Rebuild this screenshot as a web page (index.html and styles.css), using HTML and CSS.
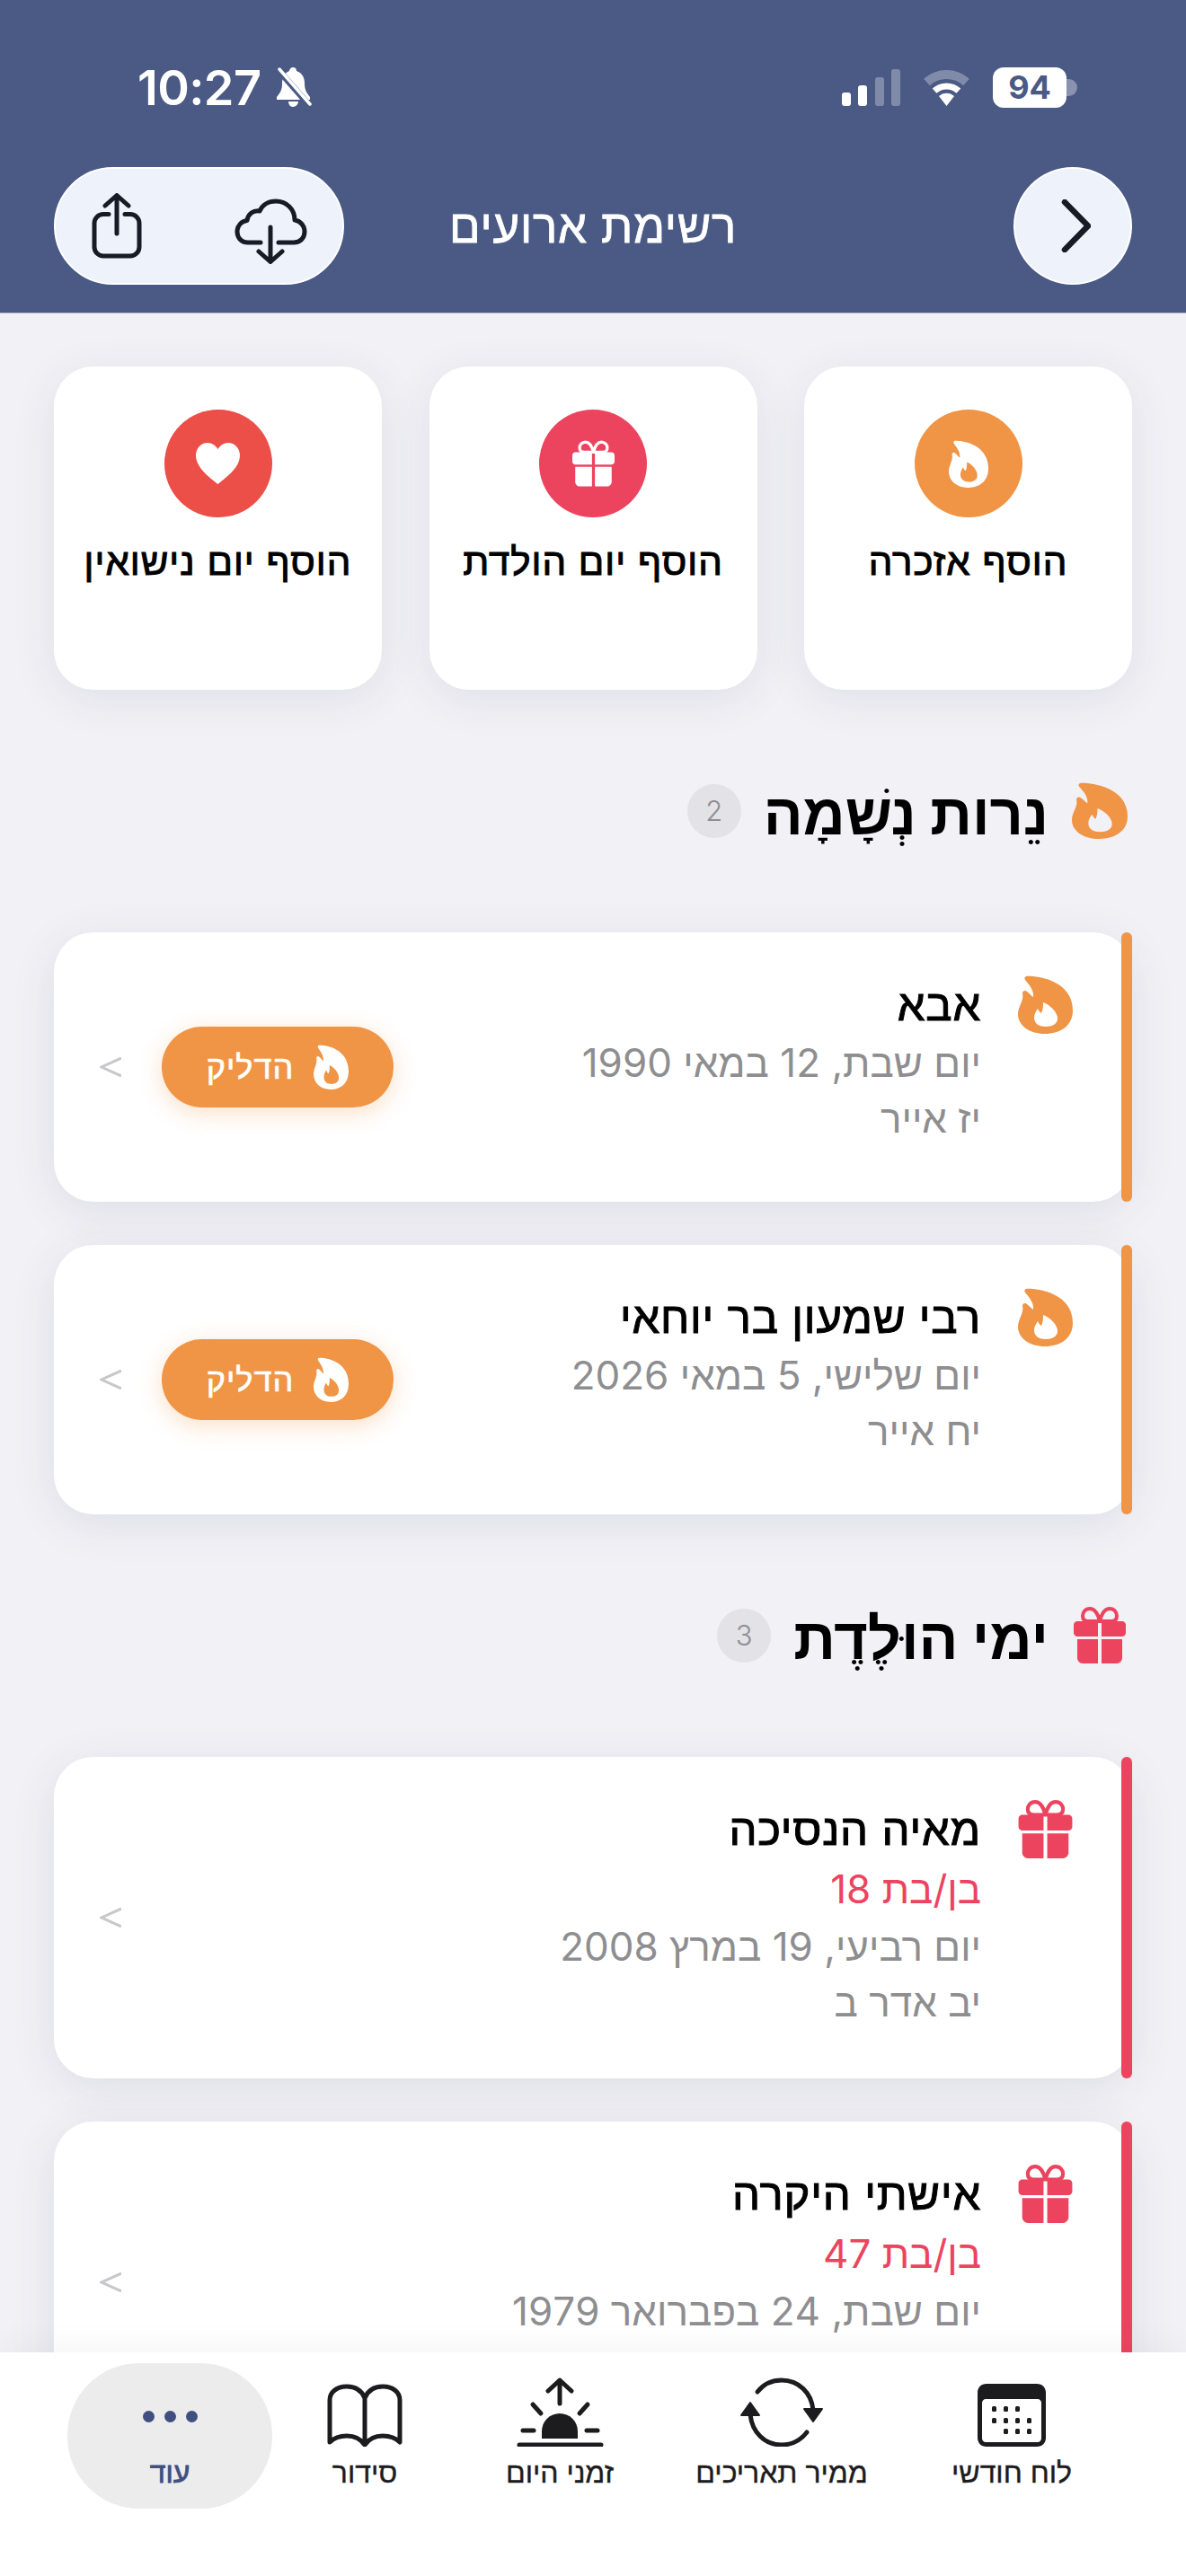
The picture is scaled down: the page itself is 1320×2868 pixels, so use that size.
FILE: index.html
```html
<!DOCTYPE html>
<html lang="he" dir="rtl">

<head>
    <meta charset="UTF-8">
    <meta name="viewport" content="width=device-width, initial-scale=1.0">
    <title>רשימת ארועים</title>
    <link rel="stylesheet" href="styles.css">
</head>

<body>
    <svg class="defs" xmlns="http://www.w3.org/2000/svg">
        <symbol id="flame" viewBox="0 0 61 65" preserveAspectRatio="none">
            <path fill-rule="evenodd" d="M9 1C13 0 61 2 61 39C61 56 47 65 30 65C13 65 0 56 0 43C0 34 7 28 5 20C5 17 8 16 10 18C13 20 15 23 17 24C18 17 13 11 8 5C7 3 7 2 9 1ZM28 30C28 34 28 38 26 42C24 41 23 39 22 37C20 40 18 43 18 47C18 54 24 57 31 57C38 57 44 54 44 48C44 41 36 33 28 30Z" />
        </symbol>
        <symbol id="gift" viewBox="0 0 58 63">
            <path d="M4 16H27V33H4C2 33 0 31 0 29V20C0 18 2 16 4 16ZM31 16H54C56 16 58 18 58 20V29C58 31 56 33 54 33H31ZM4 36H27V63H10C7 63 4 60 4 57ZM31 36H54V57C54 60 51 63 48 63H31Z" />
            <path class="gift-bow" d="M29 16C27 8 24 2 18 2C13 2 10 6 10 10C10 14 12 16 16 16H42C46 16 48 14 48 10C48 6 45 2 40 2C34 2 31 8 29 16Z" />
        </symbol>
    </svg>

    <div class="screen">
        <header class="top">
            <div class="status">
                <div class="status-left">
                    <span class="clock">10:27</span>
                    <svg class="bell" viewBox="0 0 41 44">
                        <path fill="#fff" d="M20 0C23 0 24 2 24 4C30 6 33 11 33 18C33 25 35 28 39 33V36H2V33C6 28 8 25 8 18C8 11 11 6 16 4C16 2 18 0 20 0ZM15 38H26C26 41 23 44 20 44C17 44 15 41 15 38Z" />
                        <path stroke="#4a5a84" stroke-width="7" d="M3 2L38 42" />
                        <path stroke="#fff" stroke-width="3.5" stroke-linecap="round" d="M5 2L39 41" />
                    </svg>
                </div>
                <div class="status-right">
                    <svg class="signal" viewBox="0 0 65 41">
                        <rect x="0" y="26" width="10" height="15" rx="3" fill="#fff" />
                        <rect x="18" y="18" width="10" height="23" rx="3" fill="#fff" />
                        <rect x="37" y="9" width="10" height="32" rx="3" fill="#fff" opacity=".3" />
                        <rect x="55" y="0" width="10" height="41" rx="3" fill="#fff" opacity=".3" />
                    </svg>
                    <svg class="wifi" viewBox="0 0 57 42" fill="none">
                        <path stroke="#fff" stroke-opacity=".3" stroke-width="10" d="M6.5 15.5A33 33 0 0 1 50.5 15.5" />
                        <path stroke="#fff" stroke-width="7" d="M15.1 25.1A20 20 0 0 1 41.9 25.1" />
                        <path fill="#fff" d="M28.5 42L20 31A12.5 12.5 0 0 1 37 31Z" />
                    </svg>
                    <div class="battery">
                        <span class="battery-cap"></span>
                        <span class="battery-level">94</span>
                    </div>
                </div>
            </div>

            <div class="toolbar">
                <button class="round-btn">
                    <svg class="chevron" viewBox="0 0 33 59" fill="none">
                        <path d="M4 3L30 29.5L4 56" />
                    </svg>
                </button>
                <h1 class="page-title">רשימת ארועים</h1>
                <div class="action-pill">
                    <svg class="cloud-icon" viewBox="0 0 81 73" fill="none">
                        <path d="M29 49H15C7 49 3 43 3 37C3 30 8 25 14 24.5C15 17 21 13 28 14C31 7 38 3 46 3C58 3 67 12 67 24C74 25 78 31 78 37C78 44 73 49 66 49H49" />
                        <path d="M40 32V70M27 59L40 70.5L53 59" />
                    </svg>
                    <svg class="share-icon" viewBox="0 0 56 73" fill="none">
                        <path d="M19 23.5H13A10 10 0 0 0 3 33.5V60A10 10 0 0 0 13 70H43A10 10 0 0 0 53 60V33.5A10 10 0 0 0 43 23.5H37" />
                        <path d="M28 45V3M15 14L28 2.5L41 14" />
                    </svg>
                </div>
            </div>
        </header>

        <main class="content">
            <section class="quick-row">
                <a class="quick-card">
                    <span class="quick-circle c-orange"><svg class="qi-flame"><use href="#flame" /></svg></span>
                    <span class="quick-label">הוסף אזכרה</span>
                </a>
                <a class="quick-card">
                    <span class="quick-circle c-pink"><svg class="qi-gift"><use href="#gift" /></svg></span>
                    <span class="quick-label">הוסף יום הולדת</span>
                </a>
                <a class="quick-card">
                    <span class="quick-circle c-red">
                        <svg class="qi-heart" viewBox="0 0 49 46"><path d="M24.5 46C16 39 0 28 0 14C0 6 6 0 13 0C18 0 22 3 24.5 7C27 3 31 0 36 0C43 0 49 6 49 14C49 28 33 39 24.5 46Z" /></svg>
                    </span>
                    <span class="quick-label">הוסף יום נישואין</span>
                </a>
            </section>

            <div class="section-head">
                <svg class="head-icon orange"><use href="#flame" /></svg>
                <h2>נֵרות נְשָׁמָה</h2>
                <span class="count">2</span>
            </div>

            <article class="event">
                <span class="event-bar orange-bg"></span>
                <svg class="event-icon orange"><use href="#flame" /></svg>
                <div class="event-text">
                    <div class="event-name">אבא</div>
                    <div class="event-line">יום שבת, 12 במאי 1990</div>
                    <div class="event-line">יז אייר</div>
                </div>
                <button class="light-btn"><svg><use href="#flame" /></svg>הדליק</button>
                <svg class="go" viewBox="0 0 24 22" fill="none"><path d="M24 1L2 11L24 21" /></svg>
            </article>

            <article class="event">
                <span class="event-bar orange-bg"></span>
                <svg class="event-icon orange"><use href="#flame" /></svg>
                <div class="event-text">
                    <div class="event-name">רבי שמעון בר יוחאי</div>
                    <div class="event-line">יום שלישי, 5 במאי 2026</div>
                    <div class="event-line">יח אייר</div>
                </div>
                <button class="light-btn"><svg><use href="#flame" /></svg>הדליק</button>
                <svg class="go" viewBox="0 0 24 22" fill="none"><path d="M24 1L2 11L24 21" /></svg>
            </article>

            <div class="section-head">
                <svg class="head-icon pink"><use href="#gift" /></svg>
                <h2>ימי הוּלֶדֶת</h2>
                <span class="count">3</span>
            </div>

            <article class="event tall">
                <span class="event-bar pink-bg"></span>
                <svg class="event-icon pink"><use href="#gift" /></svg>
                <div class="event-text">
                    <div class="event-name">מאיה הנסיכה</div>
                    <div class="event-age">בן/בת 18</div>
                    <div class="event-line">יום רביעי, 19 במרץ 2008</div>
                    <div class="event-line">יב אדר ב</div>
                </div>
                <svg class="go" viewBox="0 0 24 22" fill="none"><path d="M24 1L2 11L24 21" /></svg>
            </article>

            <article class="event tall">
                <span class="event-bar pink-bg"></span>
                <svg class="event-icon pink"><use href="#gift" /></svg>
                <div class="event-text">
                    <div class="event-name">אישתי היקרה</div>
                    <div class="event-age">בן/בת 47</div>
                    <div class="event-line">יום שבת, 24 בפברואר 1979</div>
                </div>
                <svg class="go" viewBox="0 0 24 22" fill="none"><path d="M24 1L2 11L24 21" /></svg>
            </article>
        </main>

        <nav class="tabs">
            <a class="tab">
                <svg class="tab-icon" width="76" height="70" viewBox="0 0 76 70">
                    <path fill="#1c1c1e" fill-rule="evenodd" d="M10 0H66C72 0 76 4 76 10V60C76 66 72 70 66 70H10C4 70 0 66 0 60V10C0 4 4 0 10 0ZM9 17C7 17 5 19 5 21V61C5 63 7 65 9 65H67C69 65 71 63 71 61V21C71 19 69 17 67 17Z" />
                    <g fill="#1c1c1e">
                        <rect x="16" y="25" width="5" height="6" rx="1.5" /><rect x="29" y="25" width="5" height="6" rx="1.5" /><rect x="42" y="25" width="5" height="6" rx="1.5" />
                        <rect x="16" y="38" width="5" height="6" rx="1.5" /><rect x="29" y="38" width="5" height="6" rx="1.5" /><rect x="42" y="38" width="5" height="6" rx="1.5" /><rect x="55" y="38" width="5" height="6" rx="1.5" />
                        <rect x="29" y="50" width="5" height="6" rx="1.5" /><rect x="42" y="50" width="5" height="6" rx="1.5" /><rect x="55" y="50" width="5" height="6" rx="1.5" />
                    </g>
                </svg>
                <span>לוח חודשי</span>
            </a>
            <a class="tab">
                <svg class="tab-icon" width="93" height="77" viewBox="0 0 93 77">
                    <g fill="none" stroke="#1c1c1e" stroke-width="5" stroke-linecap="round">
                        <path d="M19 16C26 7 35 3 46 3C65 3 79 17 81 36" />
                        <path d="M74 61C67 70 57 75 46 75C27 75 13 61 11 41" />
                    </g>
                    <path fill="#1c1c1e" stroke="#1c1c1e" stroke-width="2" stroke-linejoin="round" d="M71 35H91L81 49ZM1 42H21L11 28Z" />
                </svg>
                <span>ממיר תאריכים</span>
            </a>
            <a class="tab">
                <svg class="tab-icon" width="97" height="77" viewBox="0 0 97 77">
                    <g fill="none" stroke="#1c1c1e" stroke-width="5" stroke-linecap="round" stroke-linejoin="round">
                        <path d="M48 29V3M35 15L48 3L61 15" />
                        <path d="M18 30L27 40M79 30L70 40M7 59H19M78 59H90" />
                        <path d="M3 75H94" />
                    </g>
                    <path fill="#1c1c1e" d="M28 68V60A20 20 0 0 1 68 60V68Z" />
                </svg>
                <span>זמני היום</span>
            </a>
            <a class="tab">
                <svg class="tab-icon" width="84" height="70" viewBox="0 0 84 70" fill="none" stroke="#1c1c1e" stroke-width="5" stroke-linejoin="round">
                    <path d="M42 16C38 6 30 3 22 3C10 3 3 10 3 18V65C8 60 15 58 22 58C31 58 38 62 42 68C46 62 53 58 62 58C69 58 76 60 81 65V18C81 10 74 3 62 3C54 3 46 6 42 16ZM42 16V66" />
                </svg>
                <span>סידור</span>
            </a>
            <a class="tab active">
                <span class="tab-dots"><i></i><i></i><i></i></span>
                <span>עוד</span>
            </a>
        </nav>
    </div>
</body>

</html>
```

FILE: styles.css
```css
* {
    box-sizing: border-box;
}

body {
    margin: 0;
    font-family: Inter, "Liberation Sans", sans-serif;
    background-color: #f1f1f6;
}

h1,
h2 {
    margin: 0;
}

button {
    font-family: inherit;
    border: none;
    padding: 0;
}

.defs {
    display: none;
}

.screen {
    width: 1320px;
    height: 2868px;
    display: flex;
    flex-direction: column;
    overflow: hidden;
}

/* header */

.top {
    flex: none;
    height: 349px;
    padding: 74px 60px 0;
    background-color: #4a5a84;
    border-bottom: 1px solid #b9bcc8;
}

.status {
    display: flex;
    flex-direction: row-reverse;
    justify-content: space-between;
    align-items: center;
    height: 46px;
    padding: 0 73px 0 93px;
    direction: ltr;
}

.status-left {
    display: flex;
    align-items: center;
    gap: 16px;
    order: 2;
}

.status-right {
    display: flex;
    align-items: center;
}

.clock {
    color: #fff;
    font-size: 54px;
    font-weight: 600;
    letter-spacing: -.6px;
}

.bell {
    width: 41px;
    height: 44px;
}

.signal {
    width: 65px;
    height: 41px;
    margin-right: 23px;
}

.wifi {
    width: 57px;
    height: 42px;
    margin-right: 23px;
}

.battery {
    position: relative;
    width: 82px;
    height: 45px;
    background-color: #fff;
    border-radius: 12px;
    text-align: center;
}

.battery-level {
    color: #4a5a84;
    font-size: 36px;
    font-weight: 700;
    line-height: 45px;
}

.battery-cap {
    position: absolute;
    left: 82px;
    top: 13px;
    width: 12px;
    height: 19px;
    background-color: rgba(255, 255, 255, .35);
    border-radius: 0 10px 10px 0;
}

.toolbar {
    display: grid;
    grid-template-columns: 1fr auto 1fr;
    align-items: center;
    margin-top: 66px;
}

.round-btn {
    justify-self: start;
    width: 132px;
    height: 131px;
    display: flex;
    align-items: center;
    justify-content: center;
    padding-left: 6px;
    background-color: #eef2fa;
    border: 2px solid #fff;
    border-radius: 50%;
}

.chevron {
    width: 33px;
    height: 59px;
    stroke: #161b26;
    stroke-width: 6.5;
    stroke-linecap: round;
    stroke-linejoin: round;
}

.page-title {
    color: #fff;
    font-size: 51px;
    font-weight: 400;
    letter-spacing: .8px;
    -webkit-text-stroke: .8px #fff;
}

.action-pill {
    justify-self: end;
    width: 323px;
    height: 131px;
    display: flex;
    align-items: center;
    justify-content: space-between;
    padding: 0 39px 0 40px;
    background-color: #eef2fa;
    border: 2px solid #fff;
    border-radius: 66px;
}

.action-pill svg {
    stroke: #161b26;
    stroke-width: 5;
    stroke-linecap: round;
    stroke-linejoin: round;
}

.cloud-icon {
    width: 81px;
    height: 73px;
    margin-top: 12px;
}

.share-icon {
    width: 56px;
    height: 73px;
}

/* content */

.content {
    flex: 1;
    min-height: 0;
    overflow: hidden;
    padding: 59px 60px 0;
}

.quick-row {
    display: flex;
    justify-content: space-between;
}

.quick-card {
    width: 365px;
    height: 360px;
    display: flex;
    flex-direction: column;
    align-items: center;
    padding-top: 48px;
    background-color: #fff;
    border-radius: 44px;
    box-shadow: 0 10px 50px rgba(60, 60, 90, .09);
}

.quick-circle {
    width: 120px;
    height: 120px;
    display: flex;
    align-items: center;
    justify-content: center;
    border-radius: 50%;
    fill: #fff;
}

.c-orange {
    background-color: #f09445;
}

.c-pink {
    background-color: #ec445f;
    color: #fff;
}

.c-red {
    background-color: #ec4e48;
}

.qi-flame {
    width: 44px;
    height: 53px;
}

.qi-gift {
    width: 47px;
    height: 52px;
}

.qi-heart {
    width: 49px;
    height: 46px;
}

.gift-bow {
    fill: none;
    stroke: currentColor;
    stroke-width: 4;
}

.quick-label {
    margin-top: 23px;
    color: #000;
    font-size: 42px;
    line-height: 52px;
    letter-spacing: 1px;
    -webkit-text-stroke: 1px #000;
}

.section-head {
    display: flex;
    align-items: center;
    height: 63px;
    margin: 103px 5px 104px 0;
}

.head-icon {
    width: 62px;
    height: 63px;
}

.section-head h2 {
    margin: 6px 26px 0 0;
    color: #000;
    font-size: 65px;
    font-weight: 700;
    line-height: 63px;
}

.count {
    width: 60px;
    height: 60px;
    margin-right: 25px;
    display: flex;
    align-items: center;
    justify-content: center;
    color: #8e8e93;
    background-color: #e2e2e7;
    border-radius: 50%;
    font-size: 31px;
    font-weight: 300;
}

.orange {
    color: #f09445;
    fill: #f09445;
}

.pink {
    color: #ec445f;
    fill: #ec445f;
}

.orange-bg {
    background-color: #f09445;
}

.pink-bg {
    background-color: #ec445f;
}

.event {
    position: relative;
    min-height: 300px;
    display: flex;
    align-items: center;
    margin-bottom: 48px;
    padding: 48px 66px 48px 51px;
    background-color: #fff;
    border-radius: 44px;
    box-shadow: 0 10px 50px rgba(60, 60, 90, .1);
}

.event.tall {
    min-height: 358px;
}

.event-bar {
    position: absolute;
    top: 0;
    right: 0;
    bottom: 0;
    width: 12px;
    border-radius: 6px;
}

.event-icon {
    flex: none;
    align-self: flex-start;
    width: 61px;
    height: 65px;
    margin-left: 41px;
}

.event-text {
    flex: 1;
    align-self: flex-start;
}

.event-name {
    color: #000;
    font-size: 49px;
    line-height: 66px;
    letter-spacing: .8px;
    -webkit-text-stroke: 1px #000;
}

.event-line {
    color: #8e8e90;
    font-size: 44px;
    line-height: 62px;
}

.event-age {
    color: #ec445f;
    font-size: 44px;
    line-height: 66px;
}

.light-btn {
    flex: none;
    width: 258px;
    height: 90px;
    display: flex;
    align-items: center;
    justify-content: center;
    gap: 22px;
    margin-left: 45px;
    color: #fff;
    fill: #fff;
    background-color: #f09445;
    border-radius: 45px;
    box-shadow: 0 6px 26px rgba(240, 148, 69, .3);
    font-size: 36px;
    letter-spacing: 1px;
    -webkit-text-stroke: .7px #fff;
}

.light-btn svg {
    width: 39px;
    height: 50px;
}

.go {
    flex: none;
    width: 24px;
    height: 22px;
    stroke: #c7c7cc;
    stroke-width: 3;
}

/* bottom tabs */

.tabs {
    flex: none;
    position: relative;
    height: 249px;
    display: grid;
    grid-template-columns: 246px 266px 228px 206px 228px;
    align-items: start;
    padding: 12px 71px 0 0;
    background-color: #fff;
    box-shadow: 0 -12px 30px rgba(0, 0, 0, .03);
}

.tab {
    height: 162px;
    display: flex;
    flex-direction: column;
    align-items: center;
    justify-content: flex-end;
    padding-bottom: 22px;
    color: #1c1c1e;
    font-size: 32px;
    line-height: 36px;
    -webkit-text-stroke: .4px #1c1c1e;
}

.tab-icon {
    margin-bottom: 11px;
    -webkit-text-stroke: 0;
}

.tab.active {
    color: #3f4f7f;
    background-color: #ececec;
    border-radius: 80px;
    -webkit-text-stroke: .8px #3f4f7f;
}

.tab-dots {
    display: flex;
    gap: 11px;
    margin-bottom: 38px;
}

.tab-dots i {
    width: 13px;
    height: 13px;
    background-color: #3f4f7f;
    border-radius: 50%;
}
```
